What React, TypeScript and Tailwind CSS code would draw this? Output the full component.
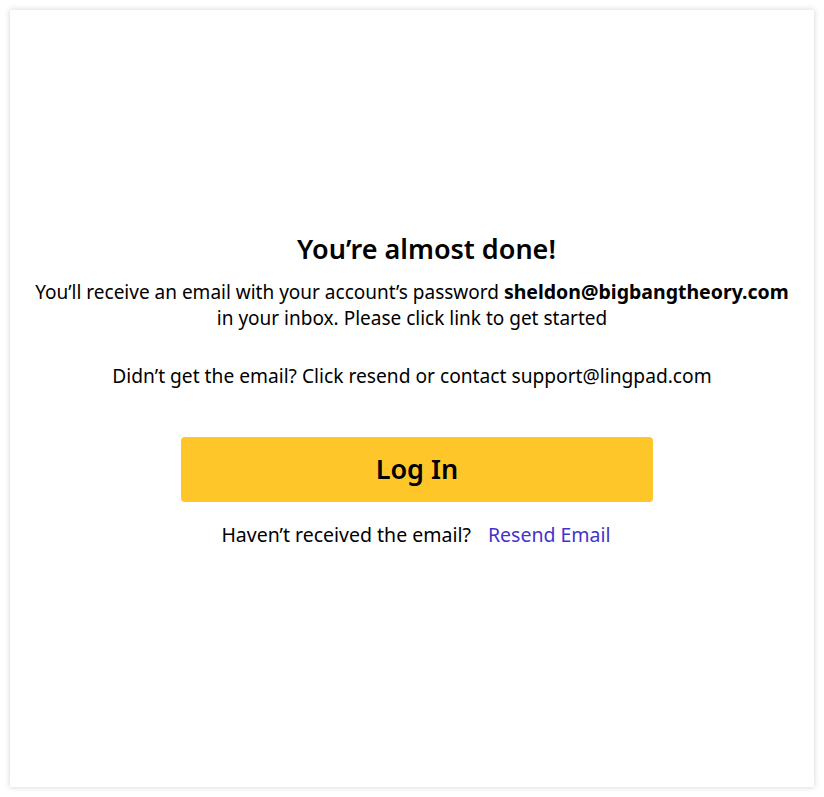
export default function App() {
  return (
    <div className="h-[797px] w-[824px] bg-white p-[10px] font-['Noto_Sans',sans-serif] text-black">
      <div className="flex h-full w-full flex-col items-center justify-center bg-white pb-[16px] shadow-[0_0_6px_rgba(0,0,0,0.18)]">
        <h1 className="pl-[29px] text-[27px] font-semibold leading-[32px]">You’re almost done!</h1>
        <p className="mt-[14px] text-center text-[19px] leading-[26px]">
          You’ll receive an email with your account’s password{" "}
          <span className="text-[19.5px] font-bold">sheldon@bigbangtheory.com</span>
          <br />
          in your inbox. Please click link to get started
        </p>
        <p className="mt-[32px] text-center text-[19.2px] leading-[26px]">
          Didn’t get the email? Click resend or contact support@lingpad.com
        </p>
        <button className="ml-[10px] mt-[48px] h-[65px] w-[472px] rounded-[4px] bg-[#ffc629] text-[27px] font-semibold">
          Log In
        </button>
        <div className="ml-[8px] mt-[20px] flex gap-[17px] text-[19.5px] leading-[26px]">
          <span>Haven’t received the email?</span>
          <a className="text-[#4433cc]">Resend Email</a>
        </div>
      </div>
    </div>
  );
}
